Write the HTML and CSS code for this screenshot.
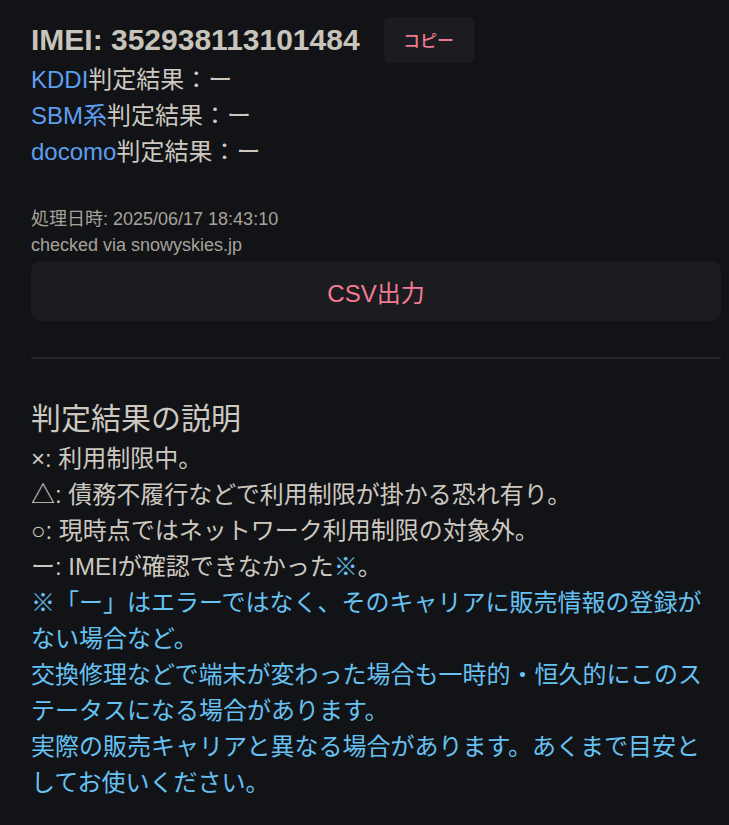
FILE: index.html
```html
<!DOCTYPE html>
<html lang="ja">
<head>
    <meta charset="UTF-8">
    <meta name="viewport" content="width=device-width, initial-scale=1.0">
    <title>IMEI 判定結果</title>
    <link rel="stylesheet" href="styles.css">
</head>
<body>
    <div class="page">
        <div class="imei-row">
            <h2 class="imei">IMEI: 352938113101484</h2>
            <button class="copy-btn">コピー</button>
        </div>
        <div class="carrier"><a href="#">KDDI</a>判定結果：ー</div>
        <div class="carrier"><a href="#">SBM系</a>判定結果：ー</div>
        <div class="carrier"><a href="#">docomo</a>判定結果：ー</div>

        <div class="meta first">処理日時: 2025/06/17 18:43:10</div>
        <div class="meta">checked via snowyskies.jp</div>
        <button class="csv-btn">CSV出力</button>

        <hr class="divider">

        <h3 class="legend-title">判定結果の説明</h3>
        <div class="legend">
            <div>×: 利用制限中。</div>
            <div>△: 債務不履行などで利用制限が掛かる恐れ有り。</div>
            <div>○: 現時点ではネットワーク利用制限の対象外。</div>
            <div>ー: IMEIが確認できなかった<span class="note">※</span>。</div>
            <div class="note">※「ー」はエラーではなく、そのキャリアに販売情報の登録がない場合など。</div>
            <div class="note">交換修理などで端末が変わった場合も一時的・恒久的にこのステータスになる場合があります。</div>
            <div class="note">実際の販売キャリアと異なる場合があります。あくまで目安としてお使いください。</div>
        </div>
    </div>
</body>
</html>
```

FILE: styles.css
```css
body {
    margin: 0;
    background: #121316;
    color: #cdc8c0;
    font-family: "Liberation Sans", Arial, "Noto Sans CJK JP", sans-serif;
    font-size: 24px;
    line-height: 36px;
}
.page {
    width: 690px;
    padding: 17px 0 20px 31px;
}
a {
    color: #5c9ff0;
    text-decoration: none;
}
.imei-row {
    display: flex;
    align-items: center;
    gap: 24px;
    height: 45px;
}
.imei {
    margin: 0;
    font-size: 30px;
    line-height: 45px;
    font-weight: bold;
    color: #c8c3bb;
}
.copy-btn {
    width: 90px;
    height: 46px;
    background: #1b1c1f;
    color: #f0788f;
    border: none;
    border-radius: 6px;
    font-family: "Liberation Sans", "Noto Sans CJK JP", sans-serif;
    font-size: 17px;
    font-weight: 500;
    padding: 0;
}
.meta {
    font-size: 18px;
    line-height: 26px;
    color: #a7a29a;
}
.meta.first {
    margin-top: 36px;
}
.csv-btn {
    display: block;
    width: 100%;
    height: 60px;
    margin-top: 3px;
    background: #1b1c1f;
    color: #f87995;
    border: none;
    border-radius: 10px;
    font-family: "Liberation Sans", "Noto Sans CJK JP", sans-serif;
    font-size: 24px;
}
.divider {
    border: none;
    height: 2px;
    background: #222428;
    margin: 36px 0 37px;
}
.legend-title {
    margin: 0;
    font-size: 30px;
    line-height: 45px;
    font-weight: normal;
    color: #cdc8c0;
}
.note {
    color: #66c2f2;
}
```
